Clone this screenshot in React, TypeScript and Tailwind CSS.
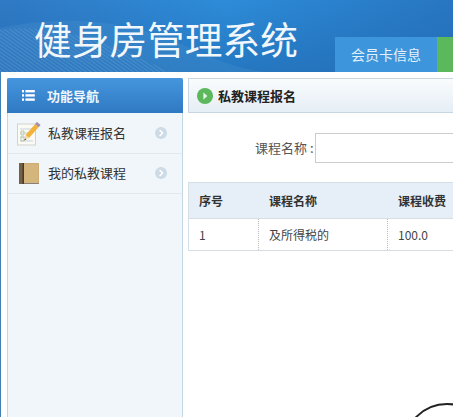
const cjk = "font-['Noto_Sans_CJK_SC','Liberation_Sans',sans-serif]";

function ListIcon() {
  return (
    <svg width="13" height="11" viewBox="0 0 13 11" className="shrink-0">
      <g fill="#fff">
        <rect x="0" y="0" width="2" height="2.4" />
        <rect x="0" y="4.2" width="2" height="2.4" />
        <rect x="0" y="8.4" width="2" height="2.4" />
        <rect x="3.4" y="0" width="9.4" height="2.4" />
        <rect x="3.4" y="4.2" width="9.4" height="2.4" />
        <rect x="3.4" y="8.4" width="9.4" height="2.4" />
      </g>
    </svg>
  );
}

function PencilIcon() {
  return (
    <svg width="24" height="25" viewBox="0 0 24 25" className="shrink-0">
      <rect x="0.5" y="3" width="18" height="21" fill="#fbfaf5" stroke="#d3d3cd" />
      <g stroke="#c9d3dc" strokeWidth="1">
        <line x1="3" y1="8" x2="15" y2="8" />
        <line x1="3" y1="12" x2="12" y2="12" />
        <line x1="3" y1="16" x2="10" y2="16" />
        <line x1="3" y1="20" x2="16" y2="20" />
      </g>
      <path d="M4 10l3 0 0 4-3 0zM4 16l3 0 0 4-3 0z" fill="none" stroke="#b9c9a9" />
      <path d="M20 1l3.5 3L12 17l-3.5-3z" fill="#f2b33c" />
      <path d="M20 1l3.5 3-1.8 2-3.5-3z" fill="#9d8fc9" />
      <path d="M8.5 14l3.5 3-5 2z" fill="#f3d9a8" />
      <path d="M8 17.4l1.5 1.2-2.5 .8z" fill="#555" />
    </svg>
  );
}

function BookIcon() {
  return (
    <svg width="20" height="21" viewBox="0 0 20 21" className="shrink-0">
      <rect x="0" y="0" width="20" height="21" rx="1" fill="#c4a36a" />
      <rect x="5" y="0.5" width="14.5" height="19.5" fill="#d4b57c" />
      <rect x="0" y="0" width="5" height="21" fill="#75604a" />
      <rect x="3.5" y="0" width="1.5" height="21" fill="#4a3a2a" />
      <rect x="5" y="20" width="15" height="1" fill="#8a8078" />
    </svg>
  );
}

function GoCircle({ big }: { big?: boolean }) {
  if (big) {
    return (
      <svg width="16" height="16" viewBox="0 0 16 16" className="shrink-0">
        <circle cx="8" cy="8" r="8" fill="#5cb85c" />
        <path d="M6.4 4.6L10.4 8l-4 3.4z" fill="#e8f5e4" />
      </svg>
    );
  }
  return (
    <svg width="12" height="12" viewBox="0 0 12 12" className="shrink-0">
      <circle cx="6" cy="6" r="6" fill="#ccdbe5" />
      <path d="M4.6 3l3 3-3 3" fill="none" stroke="#fff" strokeWidth="1.6" />
    </svg>
  );
}

function NavItem({ icon, label, height }: { icon: React.ReactNode; label: string; height: string }) {
  return (
    <div className={`flex items-center border-b border-[#e0e9ef] pr-[15px] pl-[9px] ${height}`}>
      <div className="flex w-[31px] justify-center pr-[7px]">{icon}</div>
      <span className="flex-1 text-[13px] text-[#333]">{label}</span>
      <GoCircle />
    </div>
  );
}

export default function App() {
  return (
    <div className={`relative flex h-screen flex-col overflow-hidden bg-white ${cjk}`}>
      <header className="relative flex h-[72px] shrink-0 items-end overflow-hidden bg-gradient-to-r from-[#3079c4] via-[#2d8cd8] to-[#2876c2]">
        {/* background wave */}
        <svg className="absolute inset-0" width="453" height="72" viewBox="0 0 453 72">
          <defs>
            <pattern id="hatch" width="3" height="3" patternUnits="userSpaceOnUse" patternTransform="rotate(35)">
              <line x1="0" y1="0" x2="3" y2="0" stroke="#a9d0ee" strokeWidth="0.7" strokeOpacity="0.55" />
            </pattern>
            <linearGradient id="shade" x1="0" y1="0" x2="0" y2="1">
              <stop offset="0" stopColor="#1f66ad" stopOpacity="0" />
              <stop offset="1" stopColor="#1f66ad" stopOpacity="0.55" />
            </linearGradient>
          </defs>
          <rect x="0" y="0" width="453" height="72" fill="url(#shade)" />
          <path d="M0 28C70 14 130 20 190 48S270 72 290 72H0z" fill="#5a9ed9" fillOpacity="0.2" />
          <path d="M0 30C60 22 110 44 170 72H0z" fill="url(#hatch)" />
        </svg>
        <h1 className="absolute top-[15px] left-[34px] text-[37.7px] leading-[46px] font-normal whitespace-nowrap text-[#f2f7fb]">
          健身房管理系统
        </h1>
        <div className="relative ml-[335px] flex h-[35px] w-[102px] shrink-0 items-center justify-center bg-[#3d96dc] text-[14px] text-[#e4f1fb]">
          会员卡信息
        </div>
        <div className="relative h-[35px] w-[30px] shrink-0 bg-[#5cb85c]" />
      </header>

      <div className="flex min-h-0 flex-1 border-l border-[#3f81b3] pt-[6px] pl-[6px]">
        <aside className="flex w-[176px] shrink-0 flex-col border-x border-[#c4d8e3] bg-[#f0f6fa]">
          <div className="-mx-px flex h-[35px] shrink-0 items-center rounded-t-[2px] bg-gradient-to-b from-[#4596de] to-[#2f79c2] pl-[15px] text-[13px] font-bold text-[#f0f7fc]">
            <ListIcon />
            <span className="ml-[12px]">功能导航</span>
          </div>
          <NavItem icon={<PencilIcon />} label="私教课程报名" height="h-[41px]" />
          <NavItem icon={<BookIcon />} label="我的私教课程" height="h-[41px] -mt-px" />
        </aside>

        <main className="ml-[5px] w-[420px] shrink-0">
          <div className="flex h-[35px] items-center border border-[#c8d6e2] bg-gradient-to-b from-[#fafcfd] to-[#e5eef5] pl-[8px]">
            <GoCircle big />
            <span className="ml-[5px] text-[13px] font-bold text-[#222]">私教课程报名</span>
          </div>

          <div className="mt-[20px] flex items-center">
            <label className="ml-[67px] w-[60px] text-[13px] whitespace-nowrap text-[#555]">课程名称 :</label>
            <input className="h-[30px] w-[260px] border border-[#ccc] bg-white" />
          </div>

          <div className="mt-[19px] border border-[#d5dee5] text-[12px]">
            <div className="grid h-[36px] grid-cols-[70px_129px_1fr] items-center border-b border-[#d5dee5] bg-[#e6eff7] font-bold text-[#333]">
              <span className="pl-[10px]">序号</span>
              <span className="pl-[10px]">课程名称</span>
              <span className="pl-[10px]">课程收费</span>
            </div>
            <div className="grid h-[31px] grid-cols-[70px_129px_1fr] items-center text-[#444]">
              <span className="flex h-full items-center border-r border-dotted border-[#bbb] pl-[10px]">1</span>
              <span className="flex h-full items-center border-r border-dotted border-[#bbb] pl-[10px]">及所得税的</span>
              <span className="pl-[10px]">100.0</span>
            </div>
          </div>
        </main>
      </div>

      {/* loading ring over the page */}
      <div className="absolute top-[403px] left-[403px] h-[88px] w-[88px] rounded-full border-2 border-[#222]" />
    </div>
  );
}
